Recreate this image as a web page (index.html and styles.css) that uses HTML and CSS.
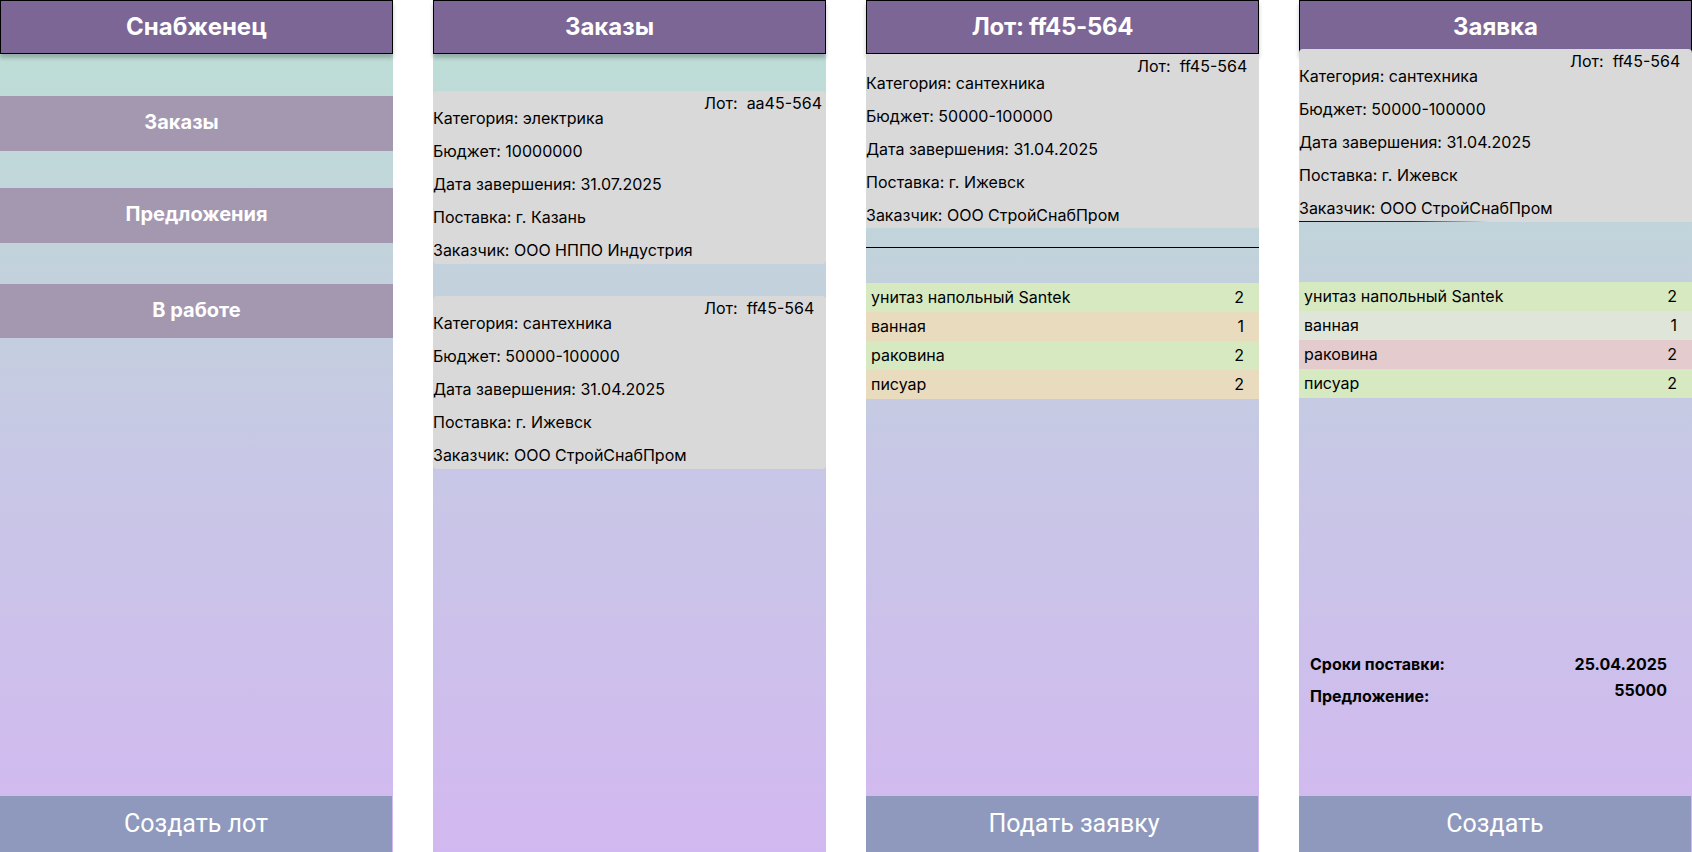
FILE: index.html
```html
<!DOCTYPE html>
<html lang="ru">
<head>
<meta charset="utf-8">
<title>Снабженец</title>
<link rel="stylesheet" href="styles.css">
</head>
<body>
<div class="board">

  <section class="panel">
    <header class="head">Снабженец</header>
    <nav class="nav">
      <div class="nav-btn nav-btn--shift">Заказы</div>
      <div class="nav-btn">Предложения</div>
      <div class="nav-btn nav-btn--far">В работе</div>
    </nav>
    <div class="spacer"></div>
    <div class="cta">Создать лот</div>
  </section>

  <section class="panel">
    <header class="head head--left">Заказы</header>
    <div class="cards">
      <article class="card">
        <div class="lot">Лот:  аа45-564</div>
        <div class="line">Категория: электрика</div>
        <div class="line">Бюджет: 10000000</div>
        <div class="line">Дата завершения: 31.07.2025</div>
        <div class="line">Поставка: г. Казань</div>
        <div class="line">Заказчик: ООО НППО Индустрия</div>
      </article>
      <article class="card">
        <div class="lot">Лот:  ff45-564</div>
        <div class="line">Категория: сантехника</div>
        <div class="line">Бюджет: 50000-100000</div>
        <div class="line">Дата завершения: 31.04.2025</div>
        <div class="line">Поставка: г. Ижевск</div>
        <div class="line">Заказчик: ООО СтройСнабПром</div>
      </article>
    </div>
  </section>

  <section class="panel">
    <header class="head head--tight">Лот: ff45-564</header>
    <article class="card card--flush">
      <div class="lot">Лот:  ff45-564</div>
      <div class="line">Категория: сантехника</div>
      <div class="line">Бюджет: 50000-100000</div>
      <div class="line">Дата завершения: 31.04.2025</div>
      <div class="line">Поставка: г. Ижевск</div>
      <div class="line">Заказчик: ООО СтройСнабПром</div>
    </article>
    <div class="divider-zone"><div class="divider"></div></div>
    <div class="items">
      <div class="item item--green"><span>унитаз напольный Santek</span><span>2</span></div>
      <div class="item item--beige"><span>ванная</span><span>1</span></div>
      <div class="item item--green"><span>раковина</span><span>2</span></div>
      <div class="item item--beige"><span>писуар</span><span>2</span></div>
    </div>
    <div class="spacer"></div>
    <div class="cta cta--right">Подать заявку</div>
  </section>

  <section class="panel">
    <header class="head head--open">Заявка</header>
    <article class="card card--over">
      <div class="lot">Лот:  ff45-564</div>
      <div class="line">Категория: сантехника</div>
      <div class="line">Бюджет: 50000-100000</div>
      <div class="line">Дата завершения: 31.04.2025</div>
      <div class="line">Поставка: г. Ижевск</div>
      <div class="line">Заказчик: ООО СтройСнабПром</div>
    </article>
    <div class="fade-line"></div>
    <div class="items items--low">
      <div class="item item--green"><span>унитаз напольный Santek</span><span>2</span></div>
      <div class="item item--grey"><span>ванная</span><span>1</span></div>
      <div class="item item--pink"><span>раковина</span><span>2</span></div>
      <div class="item item--green"><span>писуар</span><span>2</span></div>
    </div>
    <div class="offer">
      <div class="offer-row"><span>Сроки поставки:</span><span>25.04.2025</span></div>
      <div class="offer-row offer-row--top"><span class="offer-label-low">Предложение:</span><span>55000</span></div>
    </div>
    <div class="spacer"></div>
    <div class="cta">Создать</div>
  </section>

</div>
</body>
</html>
```

FILE: styles.css
```css
* {
  box-sizing: border-box;
}

html, body {
  margin: 0;
  padding: 0;
  background: #ffffff;
}

body {
  font-family: Inter, "Noto Sans", sans-serif;
  color: #000;
  font-size: 16px;
}

.board {
  display: flex;
  gap: 40px;
  width: 1692px;
  height: 852px;
  overflow: hidden;
}

.panel {
  width: 393px;
  height: 852px;
  flex: 0 0 393px;
  display: flex;
  flex-direction: column;
  background: linear-gradient(180deg, #bde0d5 0%, #c3d0dd 35%, #c8c7e6 55%, #d2b8f0 100%);
}

.head {
  height: 54px;
  flex: 0 0 54px;
  background: #7b6696;
  border: 1px solid #000;
  box-shadow: 0 4px 4px rgba(0, 0, 0, 0.22);
  color: #fff;
  font-weight: 700;
  font-size: 24px;
  line-height: 52px;
  text-align: center;
  position: relative;
}

.head--left {
  padding-right: 40px;
}

.head--tight {
  padding-right: 20px;
  letter-spacing: -0.3px;
}

.head--open {
  border-bottom: none;
}

.nav {
  display: flex;
  flex-direction: column;
  gap: 37px;
  padding-top: 42px;
}

.nav-btn {
  height: 55px;
  background: #a497b0;
  color: #fff;
  font-weight: 700;
  font-size: 20px;
  line-height: 52px;
  text-align: center;
}

.nav-btn--shift {
  padding-right: 30px;
}

.nav-btn--far {
  margin-top: 4px;
  height: 54px;
}

.spacer {
  flex: 1 1 auto;
}

.cta {
  height: 56px;
  flex: 0 0 56px;
  width: 392px;
  background: #8e99bd;
  color: #ffffff;
  font-family: Roboto, "Liberation Sans", sans-serif;
  font-weight: 400;
  font-size: 25px;
  line-height: 56px;
  text-align: center;
}

.cta--right {
  padding-left: 24px;
}

.cards {
  display: flex;
  flex-direction: column;
  gap: 32px;
  padding-top: 37px;
}

.card {
  position: relative;
  z-index: 1;
  background: #d9d9d9;
  border-radius: 4px;
  padding-top: 13px;
  height: 173px;
  display: flex;
  flex-direction: column;
  gap: 5px;
}

.card--flush {
  border-radius: 0;
  height: 174px;
  padding-top: 15px;
}

.card--over {
  margin-top: -5px;
  border-radius: 4px 4px 0 0;
}

.lot {
  position: absolute;
  top: 2px;
  left: 271px;
  line-height: 20px;
  white-space: pre;
}

.line {
  height: 28px;
  line-height: 28px;
  white-space: nowrap;
}

.divider-zone {
  height: 55px;
  padding-top: 19px;
}

.divider {
  height: 1px;
  background: #000;
}

.fade-line {
  position: relative;
  z-index: 2;
  margin-top: -1px;
  width: 190px;
  height: 1px;
  background: linear-gradient(90deg, #111 0%, #333 60%, rgba(60, 60, 60, 0) 100%);
}

.items {
  display: flex;
  flex-direction: column;
}

.items--low {
  margin-top: 60px;
}

.item {
  height: 29px;
  line-height: 29px;
  display: flex;
  justify-content: space-between;
  padding: 0 15px 0 5px;
}

.item--green { background: #d7e9c1; }
.item--beige { background: #e9dbbe; }
.item--grey  { background: #e0e5d9; }
.item--pink  { background: #e4cbcd; }

.offer {
  margin-top: 254px;
  padding: 0 25px 0 11px;
  display: flex;
  flex-direction: column;
  gap: 2px;
  font-weight: 700;
  font-size: 16px;
}

.offer-row {
  display: flex;
  justify-content: space-between;
  line-height: 24px;
}

.offer-row--top {
  align-items: flex-start;
}

.offer-label-low {
  padding-top: 6px;
}
```
